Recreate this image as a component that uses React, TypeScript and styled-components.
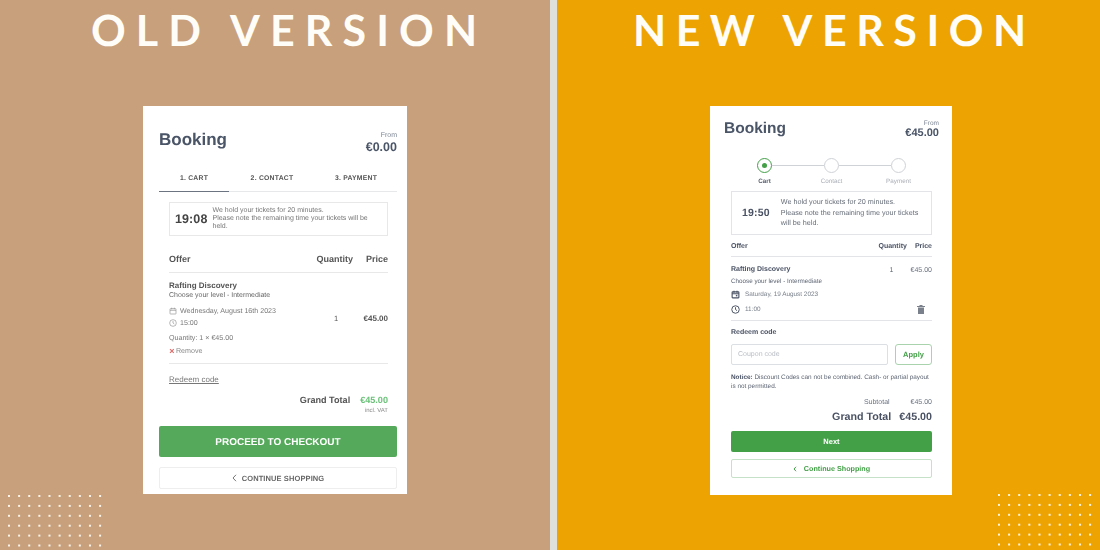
import React from "react";
import styled, { createGlobalStyle } from "styled-components";

const Global = createGlobalStyle`
  html, body { margin: 0; padding: 0; width: 1100px; height: 550px; overflow: hidden; }
  body { font-family: "Liberation Sans", Arial, sans-serif; text-rendering: geometricPrecision; }
  * { box-sizing: border-box; }
`;

const Page = styled.div`display: flex; width: 1100px; height: 550px;`;
const Panel = styled.section<{ $bg: string; $w: number }>`
  position: relative; width: ${p => p.$w}px; height: 550px; background: ${p => p.$bg};
  overflow: hidden; display: flex; flex-direction: column;
`;
const Divider = styled.div`width: 7px; background: #dfe0d9;`;
const Title = styled.h1<{ $pl: number; $ls: number }>`
  margin: 0; padding-left: ${p => p.$pl}px; height: 106px; padding-top: 4px;
  font: 700 43px/54px Lato, sans-serif; letter-spacing: ${p => p.$ls}px; color: #fffdf8; white-space: nowrap;
`;
const OldCard = styled.div`
  margin-left: 143px; width: 264px; height: 388px; background: #fff; padding: 0 10px 0 16px;
  display: flex; flex-direction: column; color: #4b4b4b; will-change: transform;
`;
const NewCard = styled.div`
  margin-left: 153px; width: 242px; height: 389px; background: #fff; padding: 0 13px 0 14px;
  display: flex; flex-direction: column; color: #4a5264; will-change: transform;
`;
const HeadRow = styled.div<{ $h: number; $pt: number }>`
  display: flex; justify-content: space-between; height: ${p => p.$h}px; padding-top: ${p => p.$pt}px;
`;
const Heading = styled.h2<{ $size: number; $lh: number }>`
  margin: 0; font-size: ${p => p.$size}px; line-height: ${p => p.$lh}px; font-weight: 700; color: #4a5568;
`;
const PriceBox = styled.div`text-align: right;`;
const FromText = styled.div<{ $size: number }>`font-size: ${p => p.$size}px; line-height: 9px; color: #7d8694;`;
const FromPrice = styled.div<{ $size: number; $lh: number }>`font-size: ${p => p.$size}px; line-height: ${p => p.$lh}px; font-weight: 700; color: #4a5568;`;

const Tabs = styled.div`display: flex; height: 26px; border-bottom: 1px solid #e6e8ea;`;
const Tab = styled.div<{ $active?: boolean; $w: number }>`
  width: ${p => p.$w}px; height: 26px; text-align: center; font-size: 6.8px; font-weight: 700; line-height: 25px;
  letter-spacing: 0.25px; color: #555;
  border-bottom: ${p => (p.$active ? "1px solid #6b7480" : "none")};
`;
const OldBody = styled.div`padding: 0 9px 0 10px; display: flex; flex-direction: column;`;
const OldTimer = styled.div`
  margin-top: 10px; height: 34px; border: 1px solid #e8e8e8; display: flex; align-items: center; padding-left: 5px; gap: 5px;
`;
const OldClock = styled.div`font-size: 12.5px; font-weight: 700; color: #444; letter-spacing: 0.1px;`;
const OldTimerText = styled.div`font-size: 7px; line-height: 8.3px; color: #777; width: 172px;`;
const OldHeader = styled.div`
  display: flex; height: 37px; padding-top: 17px; border-bottom: 1px solid #e8e8e8;
  font-size: 9px; font-weight: 700; color: #555; line-height: 12px;
`;
const Grow = styled.div`flex: 1;`;
const OldQtyHead = styled.div`margin-right: 13px;`;
const OldItem = styled.div`height: 91px; border-bottom: 1px solid #e8e8e8; display: flex;`;
const OldItemLeft = styled.div`flex: 1; padding-top: 7px;`;
const OldName = styled.div`font-size: 8px; font-weight: 700; line-height: 11px; color: #555;`;
const Small = styled.div<{ $size: number; $lh: number; $color: string; $mt?: number }>`
  font-size: ${p => p.$size}px; line-height: ${p => p.$lh}px; color: ${p => p.$color}; margin-top: ${p => p.$mt ?? 0}px;
`;
const IconRow = styled.div<{ $size: number; $mt: number; $color: string; $gap: number; $lh: number }>`
  display: flex; align-items: center; gap: ${p => p.$gap}px; font-size: ${p => p.$size}px; line-height: ${p => p.$lh}px;
  color: ${p => p.$color}; margin-top: ${p => p.$mt}px;
`;
const OldItemQty = styled.div`width: 29px; font-size: 7.5px; align-self: center; color: #555;`;
const OldItemPrice = styled.div`width: 25px; font-size: 8px; font-weight: 700; align-self: center; text-align: right; color: #555;`;
const RemoveX = styled.span`color: #e06a6a; font-weight: 700; font-size: 9px; width: 6px; text-align: center;`;
const RedeemLink = styled.div`margin-top: 10px; font-size: 8px; line-height: 12px; color: #777; text-decoration: underline;`;
const OldTotal = styled.div`margin-top: 8px; display: flex; justify-content: flex-end; align-items: center; gap: 10px; line-height: 12px;`;
const OldTotalLabel = styled.div`font-size: 9.1px; font-weight: 700; color: #555;`;
const OldTotalPrice = styled.div`font-size: 9.1px; font-weight: 700; color: #6cc37a;`;
const OldIncl = styled.div`text-align: right; font-size: 6px; line-height: 9px; color: #888; margin-top: 1px;`;
const OldCta = styled.div`
  margin-top: 10px; height: 31px; padding-top: 1px; background: #55a95a; border-radius: 2px; color: #fff;
  font-size: 10px; font-weight: 700; display: flex; align-items: center; justify-content: center;
`;
const OldBack = styled.div`
  margin-top: 10px; height: 22px; border: 1px solid #eeeeee; border-radius: 2px; color: #666;
  font-size: 7.5px; font-weight: 700; display: flex; align-items: center; justify-content: center; gap: 5px; letter-spacing: 0.1px;
`;

const Stepper = styled.div`display: flex; justify-content: center; padding-top: 5px; height: 38px;`;
const Step = styled.div<{ $last?: boolean }>`
  width: 67px; display: flex; flex-direction: column; align-items: center; position: relative;
  &::after {
    content: ""; display: ${p => (p.$last ? "none" : "block")}; position: absolute; left: 41px; top: 7px; width: 52px; height: 1px; background: #cfd2d6;
  }
`;
const Circle = styled.div<{ $on?: boolean }>`
  width: 15px; height: 15px; border-radius: 50%; border: ${p => (p.$on ? "1.3px solid #43a047" : "1.3px solid #cfd2d6")};
  display: flex; align-items: center; justify-content: center;
`;
const Dot = styled.div`width: 5px; height: 5px; border-radius: 50%; background: #43a047;`;
const StepLabel = styled.div<{ $on?: boolean }>`
  margin-top: 4px; font-size: 6.3px; line-height: 9px; color: ${p => (p.$on ? "#5a6270" : "#a9adb5")};
  font-weight: ${p => (p.$on ? 700 : 400)};
`;
const NewBody = styled.div`padding: 0 7px; display: flex; flex-direction: column;`;
const NewTimer = styled.div`
  height: 44px; border: 1px solid #e2e4e8; display: flex; align-items: center; padding-left: 10px; gap: 11px;
`;
const NewClock = styled.div`font-size: 10.5px; font-weight: 700; color: #4a5264; letter-spacing: 0.2px;`;
const NewTimerText = styled.div`font-size: 7.2px; line-height: 10.6px; color: #666d78; width: 146px;`;
const NewHeader = styled.div`
  display: flex; height: 22px; padding-top: 7px; border-bottom: 1px solid #e2e4e8; font-size: 7px; font-weight: 700; line-height: 10px;
  color: #4a5264;
`;
const NewQtyHead = styled.div`margin-right: 8px;`;
const NewItem = styled.div`height: 64px; border-bottom: 1px solid #e2e4e8; position: relative; padding-top: 8px;`;
const NewItemTop = styled.div`display: flex; align-items: flex-start;`;
const NewName = styled.div`flex: 1; font-size: 7px; font-weight: 700; line-height: 10px; color: #4a5264;`;
const NewItemQty = styled.div`width: 21px; font-size: 7px; line-height: 12px; color: #5c6472;`;
const NewItemPrice = styled.div`font-size: 7px; line-height: 12px; color: #6a7280;`;
const Trash = styled.div`position: absolute; right: 7px; bottom: 6px; width: 8px; height: 9px; display: flex;`;
const RedeemLabel = styled.div`margin-top: 7px; font-size: 7px; line-height: 10px; font-weight: 700; color: #4a5264;`;
const CouponRow = styled.div`display: flex; gap: 7px; margin-top: 6px;`;
const Coupon = styled.div`
  width: 157px; height: 21px; border: 1px solid #dcdfe3; border-radius: 2px; font-size: 7px; color: #b9bdc4;
  display: flex; align-items: center; padding-left: 6px;
`;
const Apply = styled.div`
  width: 37px; height: 21px; border: 1px solid #a9d3ac; border-radius: 3px; font-size: 7.5px; font-weight: 700; color: #43a047;
  display: flex; align-items: center; justify-content: center;
`;
const Notice = styled.div`margin-top: 8px; font-size: 6.4px; line-height: 9px; color: #5c6472; & b { color: #4a5264; }`;
const SubRow = styled.div`display: flex; justify-content: flex-end; margin-top: 7px; font-size: 7px; line-height: 9px; color: #6a7280; gap: 21px;`;
const GrandRow = styled.div`display: flex; justify-content: flex-end; margin-top: 3px; font-size: 10.7px; line-height: 14px; font-weight: 700; color: #4a5264; gap: 8px;`;
const NewCta = styled.div`
  margin-top: 7px; height: 21px; background: #43a047; border-radius: 2px; color: #fff; font-size: 7.5px; font-weight: 700;
  display: flex; align-items: center; justify-content: center;
`;
const NewBack = styled.div`
  margin-top: 7px; height: 19px; border: 1px solid #c5e1c7; border-radius: 2px; color: #43a047; font-size: 7.2px; font-weight: 700;
  display: flex; align-items: center; justify-content: center; gap: 7px;
`;
const Dots = styled.svg<{ $left: number; $top: number }>`
  position: absolute; left: ${p => p.$left}px; top: ${p => p.$top}px;
`;

const DotGrid = ({ left, top }: { left: number; top: number }) => (
  <Dots $left={left} $top={top} width={96} height={54} viewBox="0 0 96 54">
    {Array.from({ length: 6 }).flatMap((_, r) =>
      Array.from({ length: 10 }).map((_, c) => (
        <rect key={`${r}-${c}`} x={c * 10.12} y={r * 9.9} width={2} height={2} fill="#fffdf5" opacity={0.9} />
      ))
    )}
  </Dots>
);

const Cal = ({ s, bold }: { s: number; bold?: boolean }) => (
  <svg width={s} height={s} viewBox="0 0 24 24" fill="none" stroke={bold ? "#4a5264" : "#888"} strokeWidth={bold ? 3 : 1.8}>
    <rect x="3" y="5" width="18" height="16" rx="1.5" />
    <path d="M3 10h18M8 2v5M16 2v5" />
    {bold && <rect x="13" y="13" width="4" height="4" fill="#4a5264" stroke="none" />}
  </svg>
);
const Clock = ({ s, bold }: { s: number; bold?: boolean }) => (
  <svg width={s} height={s} viewBox="0 0 24 24" fill="none" stroke={bold ? "#4a5264" : "#888"} strokeWidth={bold ? 2.6 : 1.8}>
    <circle cx="12" cy="12" r="10" />
    <path d="M12 6v6l4 3" />
  </svg>
);

export default function App() {
  return (
    <Page>
      <Global />
      <Panel $bg="#c8a07c" $w={550}>
        <Title $pl={91} $ls={10.1}>OLD VERSION</Title>
        <OldCard>
          <HeadRow $h={60} $pt={25}>
            <Heading $size={17} $lh={18}>Booking</Heading>
            <PriceBox>
              <FromText $size={7}>From</FromText>
              <FromPrice $size={12.5} $lh={14}>€0.00</FromPrice>
            </PriceBox>
          </HeadRow>
          <Tabs>
            <Tab $active $w={70}>1. CART</Tab>
            <Tab $w={86}>2. CONTACT</Tab>
            <Tab $w={82}>3. PAYMENT</Tab>
          </Tabs>
          <OldBody>
            <OldTimer>
              <OldClock>19:08</OldClock>
              <OldTimerText>We hold your tickets for 20 minutes.<br />Please note the remaining time your tickets will be held.</OldTimerText>
            </OldTimer>
            <OldHeader>
              <div>Offer</div>
              <Grow />
              <OldQtyHead>Quantity</OldQtyHead>
              <div>Price</div>
            </OldHeader>
            <OldItem>
              <OldItemLeft>
                <OldName>Rafting Discovery</OldName>
                <Small $size={7} $lh={10} $color="#666">Choose your level - Intermediate</Small>
                <IconRow $size={7.1} $lh={10} $mt={5} $color="#777" $gap={3}><Cal s={8} />Wednesday, August 16th 2023</IconRow>
                <IconRow $size={7.1} $lh={10} $mt={2} $color="#777" $gap={3}><Clock s={8} />15:00</IconRow>
                <Small $size={7.1} $lh={10} $color="#777" $mt={5}>Quantity: 1 × €45.00</Small>
                <IconRow $size={7.1} $lh={10} $mt={3} $color="#888" $gap={1}><RemoveX>×</RemoveX>Remove</IconRow>
              </OldItemLeft>
              <OldItemQty>1</OldItemQty>
              <OldItemPrice>€45.00</OldItemPrice>
            </OldItem>
            <RedeemLink>Redeem code</RedeemLink>
            <OldTotal>
              <OldTotalLabel>Grand Total</OldTotalLabel>
              <OldTotalPrice>€45.00</OldTotalPrice>
            </OldTotal>
            <OldIncl>incl. VAT</OldIncl>
          </OldBody>
          <OldCta>PROCEED TO CHECKOUT</OldCta>
          <OldBack>
            <svg width="5" height="8" viewBox="0 0 5 8" fill="none" stroke="#666" strokeWidth="0.9"><path d="M4 .8 1 4l3 3.2" /></svg>
            CONTINUE SHOPPING
          </OldBack>
        </OldCard>
        <DotGrid left={8} top={495} />
      </Panel>
      <Divider />
      <Panel $bg="#eda302" $w={543}>
        <Title $pl={76} $ls={9.5}>NEW VERSION</Title>
        <NewCard>
          <HeadRow $h={47} $pt={13}>
            <Heading $size={15.5} $lh={20}>Booking</Heading>
            <PriceBox>
              <FromText $size={6.5}>From</FromText>
              <FromPrice $size={11} $lh={10}>€45.00</FromPrice>
            </PriceBox>
          </HeadRow>
          <Stepper>
            <Step><Circle $on><Dot /></Circle><StepLabel $on>Cart</StepLabel></Step>
            <Step><Circle /><StepLabel>Contact</StepLabel></Step>
            <Step $last><Circle /><StepLabel>Payment</StepLabel></Step>
          </Stepper>
          <NewBody>
            <NewTimer>
              <NewClock>19:50</NewClock>
              <NewTimerText>We hold your tickets for 20 minutes.<br />Please note the remaining time your tickets will be held.</NewTimerText>
            </NewTimer>
            <NewHeader>
              <div>Offer</div>
              <Grow />
              <NewQtyHead>Quantity</NewQtyHead>
              <div>Price</div>
            </NewHeader>
            <NewItem>
              <NewItemTop>
                <NewName>Rafting Discovery</NewName>
                <NewItemQty>1</NewItemQty>
                <NewItemPrice>€45.00</NewItemPrice>
              </NewItemTop>
              <Small $size={6.3} $lh={9} $color="#5c6472" $mt={0}>Choose your level - Intermediate</Small>
              <IconRow $size={6.4} $lh={9} $mt={4} $color="#7a818c" $gap={5}><Cal s={9} bold />Saturday, 19 August 2023</IconRow>
              <IconRow $size={6.4} $lh={9} $mt={6} $color="#7a818c" $gap={5}><Clock s={9} bold />11:00</IconRow>
              <Trash>
                <svg width="8" height="9" viewBox="0 0 8 9" fill="#7a818c"><path d="M0 1h8v1H0zM2.5 0h3v1h-3zM1 2.5h6V9H1z" /></svg>
              </Trash>
            </NewItem>
            <RedeemLabel>Redeem code</RedeemLabel>
            <CouponRow>
              <Coupon>Coupon code</Coupon>
              <Apply>Apply</Apply>
            </CouponRow>
            <Notice><b>Notice:</b> Discount Codes can not be combined. Cash- or partial payout is not permitted.</Notice>
            <SubRow><div>Subtotal</div><div>€45.00</div></SubRow>
            <GrandRow><div>Grand Total</div><div>€45.00</div></GrandRow>
            <NewCta>Next</NewCta>
            <NewBack>
              <svg width="4" height="6" viewBox="0 0 4 6" fill="none" stroke="#43a047" strokeWidth="1"><path d="M3 .8 1 3l2 2.2" /></svg>
              Continue Shopping
            </NewBack>
          </NewBody>
        </NewCard>
        <DotGrid left={441} top={494} />
      </Panel>
    </Page>
  );
}
